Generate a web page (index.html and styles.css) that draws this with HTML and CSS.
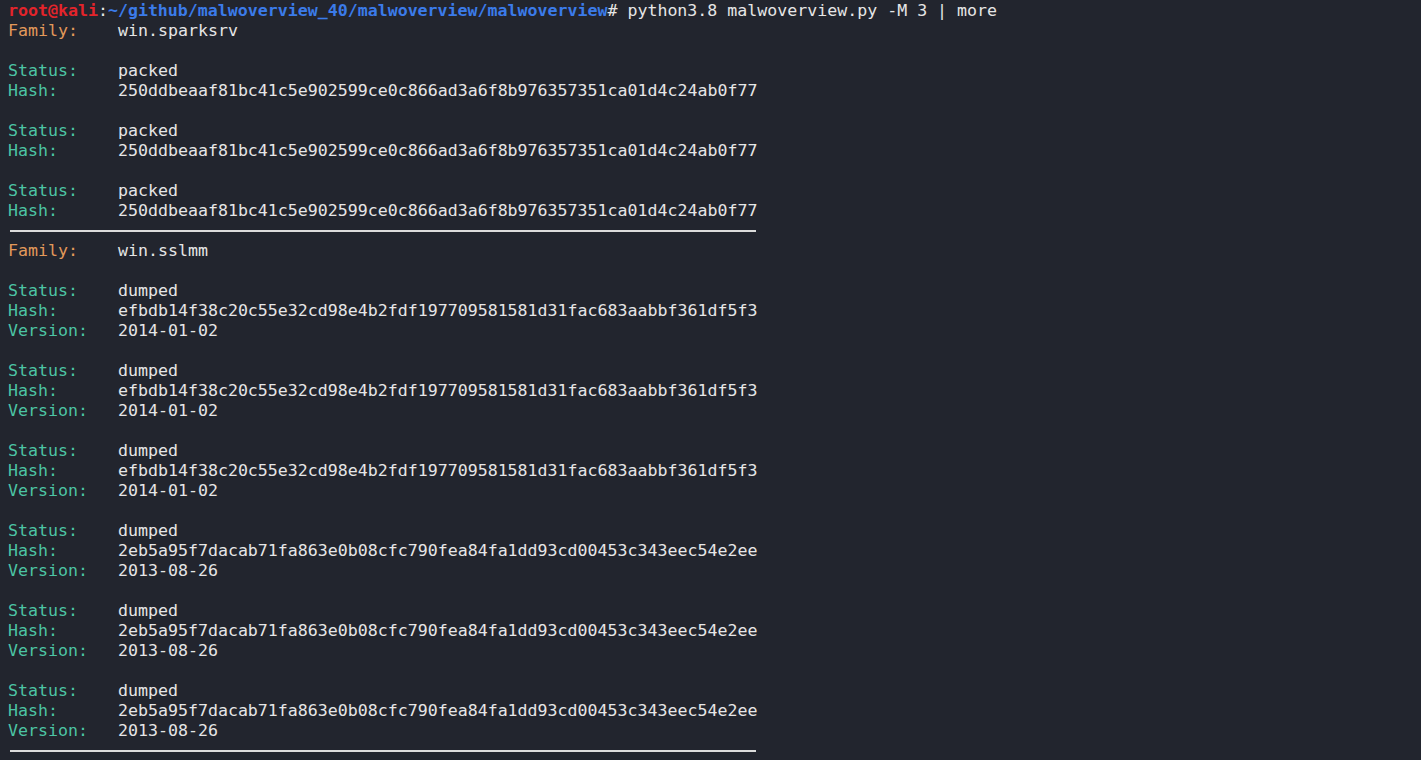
FILE: index.html
```html
<!DOCTYPE html>
<html>
<head>
<meta charset="utf-8">
<link rel="stylesheet" href="styles.css">
</head>
<body>
<div class="term">
  <div class="row"><span class="user">root@kali</span><span class="plain">:</span><span class="path">~/github/malwoverview_40/malwoverview/malwoverview</span><span class="plain"># python3.8 malwoverview.py -M 3 | more</span></div>
  <div class="row"><span class="k fam">Family:</span><span class="v">win.sparksrv</span></div>
  <div class="row"></div>
  <div class="row"><span class="k">Status:</span><span class="v">packed</span></div>
  <div class="row"><span class="k">Hash:</span><span class="v">250ddbeaaf81bc41c5e902599ce0c866ad3a6f8b976357351ca01d4c24ab0f77</span></div>
  <div class="row"></div>
  <div class="row"><span class="k">Status:</span><span class="v">packed</span></div>
  <div class="row"><span class="k">Hash:</span><span class="v">250ddbeaaf81bc41c5e902599ce0c866ad3a6f8b976357351ca01d4c24ab0f77</span></div>
  <div class="row"></div>
  <div class="row"><span class="k">Status:</span><span class="v">packed</span></div>
  <div class="row"><span class="k">Hash:</span><span class="v">250ddbeaaf81bc41c5e902599ce0c866ad3a6f8b976357351ca01d4c24ab0f77</span></div>
  <div class="row rule"><span class="line"></span></div>
  <div class="row"><span class="k fam">Family:</span><span class="v">win.sslmm</span></div>
  <div class="row"></div>
  <div class="row"><span class="k">Status:</span><span class="v">dumped</span></div>
  <div class="row"><span class="k">Hash:</span><span class="v">efbdb14f38c20c55e32cd98e4b2fdf197709581581d31fac683aabbf361df5f3</span></div>
  <div class="row"><span class="k">Version:</span><span class="v">2014-01-02</span></div>
  <div class="row"></div>
  <div class="row"><span class="k">Status:</span><span class="v">dumped</span></div>
  <div class="row"><span class="k">Hash:</span><span class="v">efbdb14f38c20c55e32cd98e4b2fdf197709581581d31fac683aabbf361df5f3</span></div>
  <div class="row"><span class="k">Version:</span><span class="v">2014-01-02</span></div>
  <div class="row"></div>
  <div class="row"><span class="k">Status:</span><span class="v">dumped</span></div>
  <div class="row"><span class="k">Hash:</span><span class="v">efbdb14f38c20c55e32cd98e4b2fdf197709581581d31fac683aabbf361df5f3</span></div>
  <div class="row"><span class="k">Version:</span><span class="v">2014-01-02</span></div>
  <div class="row"></div>
  <div class="row"><span class="k">Status:</span><span class="v">dumped</span></div>
  <div class="row"><span class="k">Hash:</span><span class="v">2eb5a95f7dacab71fa863e0b08cfc790fea84fa1dd93cd00453c343eec54e2ee</span></div>
  <div class="row"><span class="k">Version:</span><span class="v">2013-08-26</span></div>
  <div class="row"></div>
  <div class="row"><span class="k">Status:</span><span class="v">dumped</span></div>
  <div class="row"><span class="k">Hash:</span><span class="v">2eb5a95f7dacab71fa863e0b08cfc790fea84fa1dd93cd00453c343eec54e2ee</span></div>
  <div class="row"><span class="k">Version:</span><span class="v">2013-08-26</span></div>
  <div class="row"></div>
  <div class="row"><span class="k">Status:</span><span class="v">dumped</span></div>
  <div class="row"><span class="k">Hash:</span><span class="v">2eb5a95f7dacab71fa863e0b08cfc790fea84fa1dd93cd00453c343eec54e2ee</span></div>
  <div class="row"><span class="k">Version:</span><span class="v">2013-08-26</span></div>
  <div class="row rule"><span class="line"></span></div>
</div>
</body>
</html>
```

FILE: styles.css
```css
html, body {
  margin: 0;
  padding: 0;
  background: #22252e;
  height: 100%;
  overflow: hidden;
}
.term {
  padding: 1px 0 0 8px;
  font-family: "DejaVu Sans Mono", "Liberation Mono", monospace;
  font-size: 16.6px;
  color: #e6e6e6;
}
.row {
  height: 20px;
  line-height: 20px;
  white-space: pre;
  display: flex;
  align-items: center;
}
.user {
  color: #e3242b;
  font-weight: bold;
}
.path {
  color: #3b7be9;
  font-weight: bold;
}
.plain {
  color: #e6e6e6;
}
.k {
  width: 110px;
  flex: none;
  color: #4cc4a4;
}
.k.fam {
  color: #e3995a;
}
.v {
  color: #e6e6e6;
}
.rule .line {
  display: block;
  margin-left: 2px;
  width: 746px;
  height: 2px;
  background: #dcdcdc;
}
```
